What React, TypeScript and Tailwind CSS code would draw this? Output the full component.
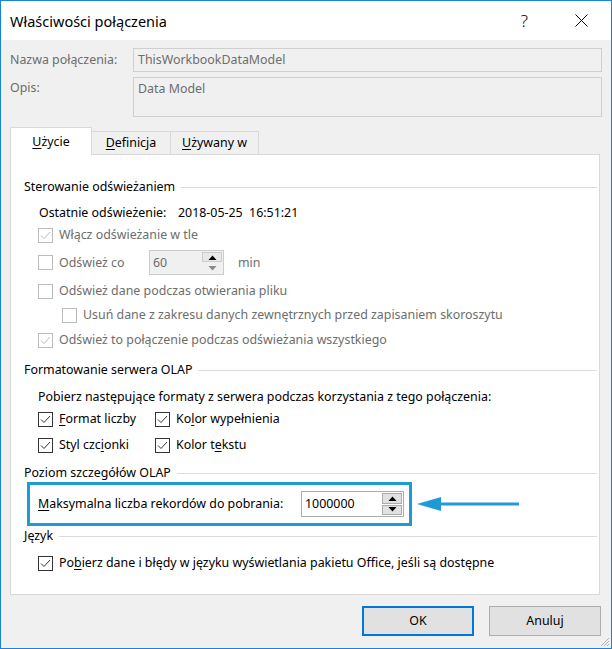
import React from 'react';

const font = { fontFamily: '"Noto Sans", "Liberation Sans", Arial, sans-serif' };

interface CheckProps {
  checked?: boolean;
  disabled?: boolean;
  label: React.ReactNode;
  className?: string;
}

function Check({ checked = false, disabled = false, label, className = '' }: CheckProps) {
  const stroke = disabled ? '#bcbcbc' : '#333333';
  return (
    <div className={`flex items-center gap-[6px] h-[20px] ${className}`}>
      <div
        className={`w-[15px] h-[15px] shrink-0 bg-white border ${
          disabled ? 'border-[#bcbcbc]' : 'border-[#333333]'
        } flex items-center justify-center`}
      >
        {checked && (
          <svg width="13" height="13" viewBox="0 0 13 13">
            <polyline points="2,6.5 5,9.5 11,3" fill="none" stroke={stroke} strokeWidth="1" />
          </svg>
        )}
      </div>
      <span className={disabled ? 'text-[#6d6d6d] whitespace-nowrap' : 'text-black whitespace-nowrap'}>{label}</span>
    </div>
  );
}

function Heading({ text, className = '' }: { text: string; className?: string }) {
  return (
    <div className={`flex items-center ${className}`}>
      <span className="text-black whitespace-nowrap">{text}</span>
      <div className="flex-1 h-px bg-[#dcdcdc] ml-[6px]" />
    </div>
  );
}

function Tri({ up, color }: { up: boolean; color: string }) {
  return (
    <svg width="9" height="5" viewBox="0 0 9 5">
      {up ? <polygon points="0.5,5 4.5,0.5 8.5,5" fill={color} /> : <polygon points="0.5,0 4.5,4.5 8.5,0" fill={color} />}
    </svg>
  );
}

function Spinner({ value, disabled = false, className = '' }: { value: string; disabled?: boolean; className?: string }) {
  return (
    <div
      className={`flex items-stretch border ${
        disabled ? 'border-[#cccccc] bg-[#f0f0f0]' : 'border-[#adadad] bg-white'
      } ${className}`}
    >
      <div className={`flex-1 flex items-center pl-[3px] ${disabled ? 'text-[#6d6d6d]' : 'text-black'}`}>{value}</div>
      <div className="w-[21px] flex flex-col py-[1px] pr-[1px] gap-[1px]">
        <div
          className={`flex-1 flex items-center justify-center border ${
            disabled ? 'border-[#cccccc] bg-[#e8e8e8]' : 'border-[#adadad] bg-[#e1e1e1]'
          }`}
        >
          <Tri up color="#000000" />
        </div>
        <div
          className={`flex-1 flex items-center justify-center border ${
            disabled ? 'border-[#f0f0f0] bg-[#f0f0f0]' : 'border-[#adadad] bg-[#e1e1e1]'
          }`}
        >
          <Tri up={false} color={disabled ? '#8a8a8a' : '#000000'} />
        </div>
      </div>
    </div>
  );
}

export default function App() {
  return (
    <div
      className="w-[612px] h-[649px] border border-[#1883d7] flex flex-col relative text-[12.4px] leading-[16px] overflow-hidden"
      style={font}
    >
      {/* title bar */}
      <div className="h-[39px] bg-white flex items-center pl-[9px] pr-[23px] shrink-0">
        <span className="text-[14.5px] text-black">Właściwości połączenia</span>
        <div className="flex-1" />
        <span className="text-[17px] font-light text-black mr-[47px]">?</span>
        <svg width="13" height="13" viewBox="0 0 13 13">
          <line x1="0.5" y1="0.5" x2="12.5" y2="12.5" stroke="#000" strokeWidth="1" />
          <line x1="12.5" y1="0.5" x2="0.5" y2="12.5" stroke="#000" strokeWidth="1" />
        </svg>
      </div>

      {/* body */}
      <div className="flex-1 bg-[#f0f0f0] flex flex-col pl-[9px] pr-[9px] pt-[8px]">
        <div className="flex items-center h-[24px]">
          <div className="w-[123px] text-[#6d6d6d]">Nazwa połączenia:</div>
          <div className="w-[469px] h-[24px] border border-[#cfcfcf] bg-[#f0f0f0] flex items-center pl-[4px] text-[#6d6d6d]">
            ThisWorkbookDataModel
          </div>
        </div>
        <div className="flex mt-[5px]">
          <div className="w-[123px] text-[#6d6d6d] pt-[3px]">Opis:</div>
          <div className="w-[469px] h-[40px] border border-[#cfcfcf] bg-[#f0f0f0] pl-[4px] pt-[3px] text-[#6d6d6d]">
            Data Model
          </div>
        </div>

        {/* tabs */}
        <div className="flex items-end mt-[11px] h-[27px] relative z-10 -mb-px">
          <div className="w-[82px] h-[28px] bg-white border border-b-0 border-[#d9d9d9] flex items-center justify-center text-black">
            <span>
              <span className="underline underline-offset-2">U</span>życie
            </span>
          </div>
          <div className="w-[79px] h-[24px] bg-[#f0f0f0] border border-l-0 border-[#d9d9d9] flex items-center justify-center text-black">
            <span>
              <span className="underline underline-offset-2">D</span>efinicja
            </span>
          </div>
          <div className="w-[88px] h-[24px] bg-[#f0f0f0] border border-l-0 border-[#d9d9d9] flex items-center justify-center text-black">
            <span>
              <span className="underline underline-offset-2">U</span>żywany w
            </span>
          </div>
        </div>

        {/* panel */}
        <div className="w-[590px] h-[441px] bg-white border border-[#d9d9d9] flex flex-col pl-[13px] pr-[2px] pt-[22px]">
          <Heading text="Sterowanie odświeżaniem" className="h-[20px]" />
          <div className="flex items-center h-[20px] mt-[6px] ml-[15px] text-black">
            <span className="w-[139px]">Ostatnie odświeżenie:</span>
            <span className="whitespace-pre">2018-05-25  16:51:21</span>
          </div>
          <Check checked disabled label="Włącz odświeżanie w tle" className="mt-[2px] ml-[14px]" />
          <div className="flex items-center h-[25px] mt-[5px] ml-[14px]">
            <div className="w-[15px] h-[15px] border border-[#bcbcbc] bg-white shrink-0" />
            <span className="w-[90px] ml-[6px] text-[#6d6d6d]">Odśwież co</span>
            <Spinner value="60" disabled className="w-[75px] h-[25px]" />
            <span className="ml-[14px] text-[#6d6d6d]">min</span>
          </div>
          <Check disabled label="Odśwież dane podczas otwierania pliku" className="mt-[6px] ml-[14px]" />
          <Check
            disabled
            label="Usuń dane z zakresu danych zewnętrznych przed zapisaniem skoroszytu"
            className="mt-[4px] ml-[38px]"
          />
          <Check
            checked
            disabled
            label="Odśwież to połączenie podczas odświeżania wszystkiego"
            className="mt-[5px] ml-[14px]"
          />

          <Heading text="Formatowanie serwera OLAP" className="h-[20px] mt-[10px]" />
          <div className="h-[20px] flex items-center mt-[7px] ml-[14px] text-black">
            Pobierz następujące formaty z serwera podczas korzystania z tego połączenia:
          </div>
          <div className="flex mt-[2px] ml-[14px]">
            <Check
              checked
              label={
                <>
                  <span className="underline underline-offset-2">F</span>ormat liczby
                </>
              }
              className="w-[117px]"
            />
            <Check
              checked
              label={
                <>
                  Ko<span className="underline underline-offset-2">l</span>or wypełnienia
                </>
              }
            />
          </div>
          <div className="flex mt-[6px] ml-[14px]">
            <Check
              checked
              label={
                <>
                  Styl czc<span className="underline underline-offset-2">i</span>onki
                </>
              }
              className="w-[117px]"
            />
            <Check
              checked
              label={
                <>
                  Kolor t<span className="underline underline-offset-2">e</span>kstu
                </>
              }
            />
          </div>

          <Heading text="Poziom szczegółów OLAP" className="h-[18px] mt-[9px]" />
          <div className="flex items-center">
            <div className="w-[385px] h-[44px] ml-[3px] border-[3px] border-[#1e9bd7] flex items-center pl-[8px] text-black">
              <span className="w-[263px] shrink-0">
                <span className="underline underline-offset-2">M</span>aksymalna liczba rekordów do pobrania:
              </span>
              <Spinner value="1000000" className="w-[103px] h-[26px]" />
            </div>
            <svg width="103" height="16" viewBox="0 0 103 16" className="ml-[5px]">
              <polygon points="0,8 24,1 24,15" fill="#1e9bd7" />
              <rect x="22" y="6.5" width="80" height="3" fill="#1e9bd7" />
            </svg>
          </div>
          <Heading text="Język" className="h-[20px]" />
          <Check
            checked
            label={
              <>
                Po<span className="underline underline-offset-2">b</span>ierz dane i błędy w języku wyświetlania pakietu
                Office, jeśli są dostępne
              </>
            }
            className="mt-[7px] ml-[14px]"
          />
        </div>

        {/* buttons */}
        <div className="flex justify-end gap-[15px] mt-[11px] pr-[1px]">
          <button className="w-[112px] h-[30px] border-2 border-[#0078d7] bg-[#e1e1e1] text-black">OK</button>
          <button className="w-[112px] h-[30px] border border-[#adadad] bg-[#e1e1e1] text-black">Anuluj</button>
        </div>
      </div>

      {/* resize grip */}
      <svg width="11" height="11" viewBox="0 0 11 11" className="absolute right-[1px] bottom-[1px]">
        <line x1="10" y1="2" x2="2" y2="10" stroke="#b4b4b4" strokeWidth="1" />
        <line x1="10" y1="5" x2="5" y2="10" stroke="#b4b4b4" strokeWidth="1" />
        <line x1="10" y1="8" x2="8" y2="10" stroke="#b4b4b4" strokeWidth="1" />
      </svg>
    </div>
  );
}
